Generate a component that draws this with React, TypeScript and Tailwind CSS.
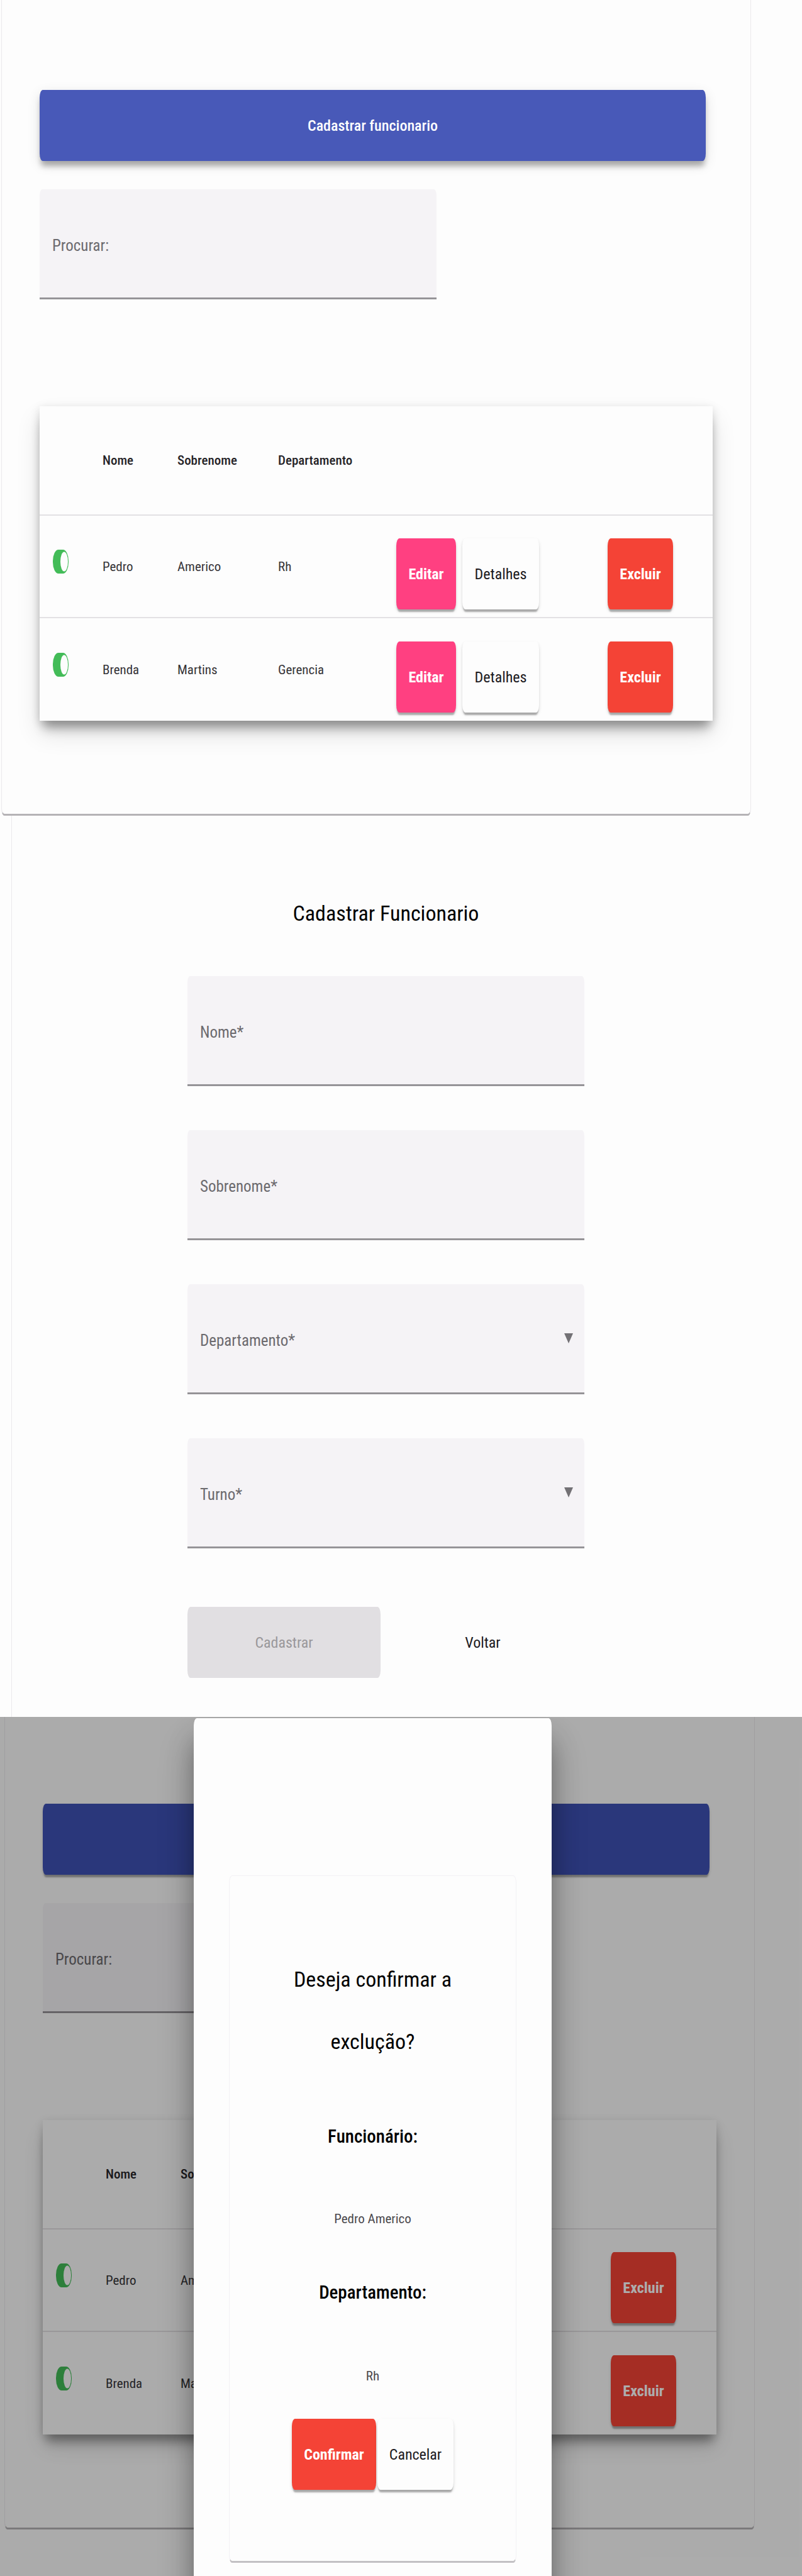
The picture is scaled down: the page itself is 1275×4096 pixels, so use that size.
import { useId } from "react";

type Employee = { nome: string; sobrenome: string; departamento: string };

const employees: Employee[] = [
  { nome: "Pedro", sobrenome: "Americo", departamento: "Rh" },
  { nome: "Brenda", sobrenome: "Martins", departamento: "Gerencia" },
];

const raised =
  "shadow-[0_5px_2px_-1px_rgba(0,0,0,0.25),0_3px_5px_rgba(0,0,0,0.15)]";
const buttonBase =
  "h-[113px] text-2xl leading-8 [border-radius:5px/12px]";
const fieldBox =
  "grid h-[175px] w-[631px] max-w-full items-center border-b-3 border-[#959397] bg-[#f5f3f6] [border-top-left-radius:4px_10px] [border-top-right-radius:4px_10px]";
const fieldControl =
  "col-start-1 row-start-1 h-full w-full bg-transparent px-5 text-[25px] outline-none";
const fieldLabel =
  "pointer-events-none col-start-1 row-start-1 px-5 pt-2 text-[25px] leading-8 text-[#6c6a6e]";

function Field({ label }: { label: string }) {
  const id = useId();
  return (
    <div className={fieldBox}>
      <input id={id} type="text" className={fieldControl} />
      <label htmlFor={id} className={fieldLabel}>
        {label}
      </label>
    </div>
  );
}

function SelectField({ label }: { label: string }) {
  const id = useId();
  return (
    <div className={fieldBox}>
      <select id={id} defaultValue="" className={`${fieldControl} appearance-none`}>
        <option value="" />
      </select>
      <label htmlFor={id} className={fieldLabel}>
        {label}
      </label>
      <svg
        viewBox="0 0 14 16"
        className="pointer-events-none col-start-1 row-start-1 mr-[18px] h-4 w-3.5 justify-self-end"
        aria-hidden="true"
      >
        <path d="M0 0h14L7 16z" fill="#737175" />
      </svg>
    </div>
  );
}

function Toggle({ name }: { name: string }) {
  return (
    <label className="block w-[25px] cursor-pointer pb-4">
      <input type="checkbox" defaultChecked className="sr-only" aria-label={`Ativo: ${name}`} />
      <svg viewBox="0 0 25 38" className="block h-[38px] w-[25px]" aria-hidden="true">
        <rect width="25" height="38" rx="9" ry="18" fill="#43bc58" />
        <ellipse cx="18" cy="19" rx="6" ry="15.5" fill="#fdfdfd" />
      </svg>
    </label>
  );
}

function EmployeeTable() {
  return (
    <table className="w-full table-fixed border-separate border-spacing-0 bg-[#fdfdfd] text-left text-[21px] leading-8 shadow-[0_18px_16px_-6px_rgba(0,0,0,0.3),0_20px_36px_rgba(0,0,0,0.12),0_4px_14px_rgba(0,0,0,0.14)]">
      <thead>
        <tr className="h-[174px] text-[#262428] [&>th]:border-b-2 [&>th]:border-[#e3e1e4] [&>th]:p-0 [&>th]:font-medium">
          <th className="w-[100px]" aria-label="Ativo" />
          <th className="w-[119px]">Nome</th>
          <th className="w-[160px]">Sobrenome</th>
          <th className="w-[188px]">Departamento</th>
          <th className="w-[336px]" aria-label="Ações" />
          <th aria-label="Remover" />
        </tr>
      </thead>
      <tbody>
        {employees.map((e) => (
          <tr
            key={e.nome}
            className="h-[163px] text-[#363438] [&:not(:last-child)>td]:border-b-2 [&>td]:border-[#e3e1e4] [&>td]:p-0"
          >
            <td>
              <div className="pl-[21px]">
                <Toggle name={e.nome} />
              </div>
            </td>
            <td>{e.nome}</td>
            <td>{e.sobrenome}</td>
            <td>{e.departamento}</td>
            <td>
              <div className="flex gap-2.5 pt-6">
                <button
                  type="button"
                  className={`${buttonBase} ${raised} w-[95px] bg-[#ff4081] font-bold text-white`}
                >
                  Editar
                </button>
                <button
                  type="button"
                  className={`${buttonBase} ${raised} w-[122px] bg-[#fdfdfd] text-[#1c1a1e]`}
                >
                  Detalhes
                </button>
              </div>
            </td>
            <td>
              <div className="pt-6">
                <button
                  type="button"
                  className={`${buttonBase} ${raised} w-[104px] bg-[#f44336] font-bold text-white`}
                >
                  Excluir
                </button>
              </div>
            </td>
          </tr>
        ))}
      </tbody>
    </table>
  );
}

function EmployeeList({ highlighted = false }: { highlighted?: boolean }) {
  return (
    <div className="mr-[75px] flex flex-col border-x border-b-3 border-x-[#ebe9ec] border-b-[#b5b3b6] px-[60px] pt-[143px] pb-[148px] [border-bottom-left-radius:5px_12px] [border-bottom-right-radius:5px_12px]">
      <button
        type="button"
        className={
          highlighted
            ? `${buttonBase} mr-[11px] bg-[#4859b8] font-medium text-white shadow-[0_10px_8px_-2px_rgba(0,0,0,0.28),0_6px_20px_rgba(0,0,0,0.12)]`
            : `${buttonBase} ${raised} mr-[11px] bg-[#3f51b5] font-medium text-white`
        }
      >
        Cadastrar funcionario
      </button>
      <div className="mt-[45px] mb-[170px]">
        <Field label="Procurar:" />
      </div>
      <EmployeeTable />
    </div>
  );
}

function RegisterForm() {
  return (
    <form className="ml-[18px] flex flex-col items-center border-l border-[#ebe9ec] pt-[135px] pr-[67px] pb-[62px]">
      <h1 className="text-[34px] leading-10 text-black">Cadastrar Funcionario</h1>
      <div className="mt-20 flex flex-col gap-[70px]">
        <Field label="Nome*" />
        <Field label="Sobrenome*" />
        <SelectField label="Departamento*" />
        <SelectField label="Turno*" />
      </div>
      <div className="mt-[93px] grid w-[631px] grid-cols-2 gap-[9px] pr-2">
        <button type="button" disabled className={`${buttonBase} bg-[#e1dfe2] text-[#9a989b]`}>
          Cadastrar
        </button>
        <button type="button" className={`${buttonBase} text-[#1c1a1e]`}>
          Voltar
        </button>
      </div>
    </form>
  );
}

function ConfirmDialog() {
  const titleId = useId();
  return (
    <div className="absolute inset-0 flex items-start justify-center bg-black/32 pt-0.5 pr-[90px]">
      <div
        role="dialog"
        aria-modal="true"
        aria-labelledby={titleId}
        className="w-[569px] bg-[#fdfdfd] px-14 pt-[250px] pb-12 shadow-[0_30px_40px_-6px_rgba(0,0,0,0.35),0_40px_60px_rgba(0,0,0,0.2)] [border-radius:5px/12px]"
      >
        <div className="flex flex-col items-center border border-b-3 border-[#f3f1f5] border-b-[#c3c1c4] px-20 pt-[115px] pb-[113px] text-center [border-radius:5px/12px]">
          <h2 id={titleId} className="text-[34px] leading-[99px] text-black">
            Deseja confirmar a exclução?
          </h2>
          <h3 className="mt-[81px] text-[29px] leading-10 font-medium text-black">Funcionário:</h3>
          <p className="mt-[95px] text-[21px] leading-8 text-[#4b494d]">Pedro Americo</p>
          <h3 className="mt-[81px] text-[29px] leading-10 font-medium text-black">Departamento:</h3>
          <p className="mt-[97px] text-[21px] leading-8 text-[#4b494d]">Rh</p>
          <div className="mt-[52px] flex gap-0.5">
            <button
              type="button"
              className={`${buttonBase} ${raised} w-[134px] bg-[#f44336] font-bold text-white`}
            >
              Confirmar
            </button>
            <button
              type="button"
              className={`${buttonBase} ${raised} w-[121px] bg-[#fdfdfd] text-[#1c1a1e]`}
            >
              Cancelar
            </button>
          </div>
        </div>
      </div>
    </div>
  );
}

export default function App() {
  return (
    <main className="min-h-screen overflow-hidden bg-[#fdfdfd] font-['Roboto_Condensed',Roboto,sans-serif]">
      <section className="pr-1.5 pl-0.5">
        <EmployeeList highlighted />
      </section>
      <section>
        <RegisterForm />
      </section>
      <section className="relative overflow-hidden pb-[74px] pl-[7px]">
        <div className="-mt-[5px]">
          <EmployeeList />
        </div>
        <ConfirmDialog />
      </section>
    </main>
  );
}
